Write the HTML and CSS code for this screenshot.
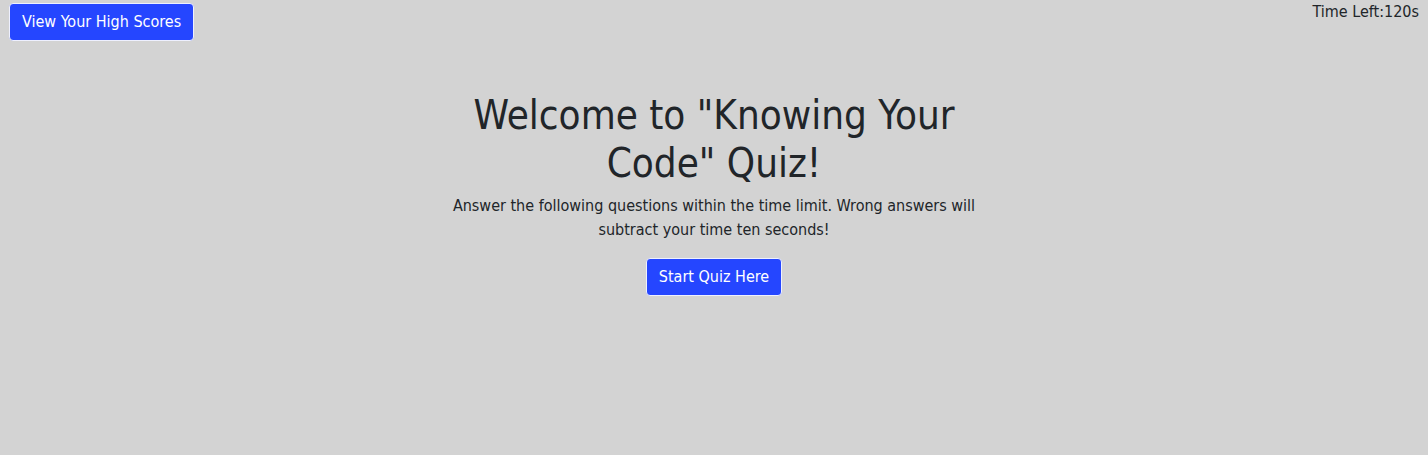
FILE: index.html
```html
<!DOCTYPE html>
<html lang="en">
<head>
<meta charset="utf-8">
<title>Knowing Your Code Quiz</title>
<link rel="stylesheet" href="styles.css">
</head>
<body>
<header class="topbar">
  <button class="btn">View Your High Scores</button>
  <div class="timer">Time Left:<span>120s</span></div>
</header>
<main class="intro">
  <h1 class="title">Welcome to "Knowing Your Code" Quiz!</h1>
  <p class="lead">Answer the following questions within the time limit. Wrong answers will subtract your time ten seconds!</p>
  <button class="btn">Start Quiz Here</button>
</main>
</body>
</html>
```
FILE: styles.css
```css
* { box-sizing: border-box; }
html, body { margin: 0; padding: 0; }
body {
  background: #d3d3d3;
  color: #212529;
  font-family: "DejaVu Sans Condensed", "DejaVu Sans", sans-serif;
  font-size: 16px;
  line-height: 1.5;
  height: 455px;
}
.topbar {
  display: flex;
  justify-content: space-between;
  align-items: flex-start;
  padding: 3px 9px 0 9px;
}
.timer {
  margin-top: -3px;
  line-height: 24px;
}
.btn {
  font-family: inherit;
  font-size: 16px;
  line-height: 24px;
  padding: 6px 12px;
  color: #fff;
  background: #2546ff;
  border: 1px solid #eef0ff;
  border-radius: 4px;
}
.intro {
  width: 540px;
  margin: 50px auto 0;
  display: flex;
  flex-direction: column;
  align-items: center;
  text-align: center;
}
.title {
  font-size: 40px;
  font-weight: 400;
  line-height: 48px;
  margin: 0 0 7px;
}
.lead {
  margin: 0 0 16px;
}
```
